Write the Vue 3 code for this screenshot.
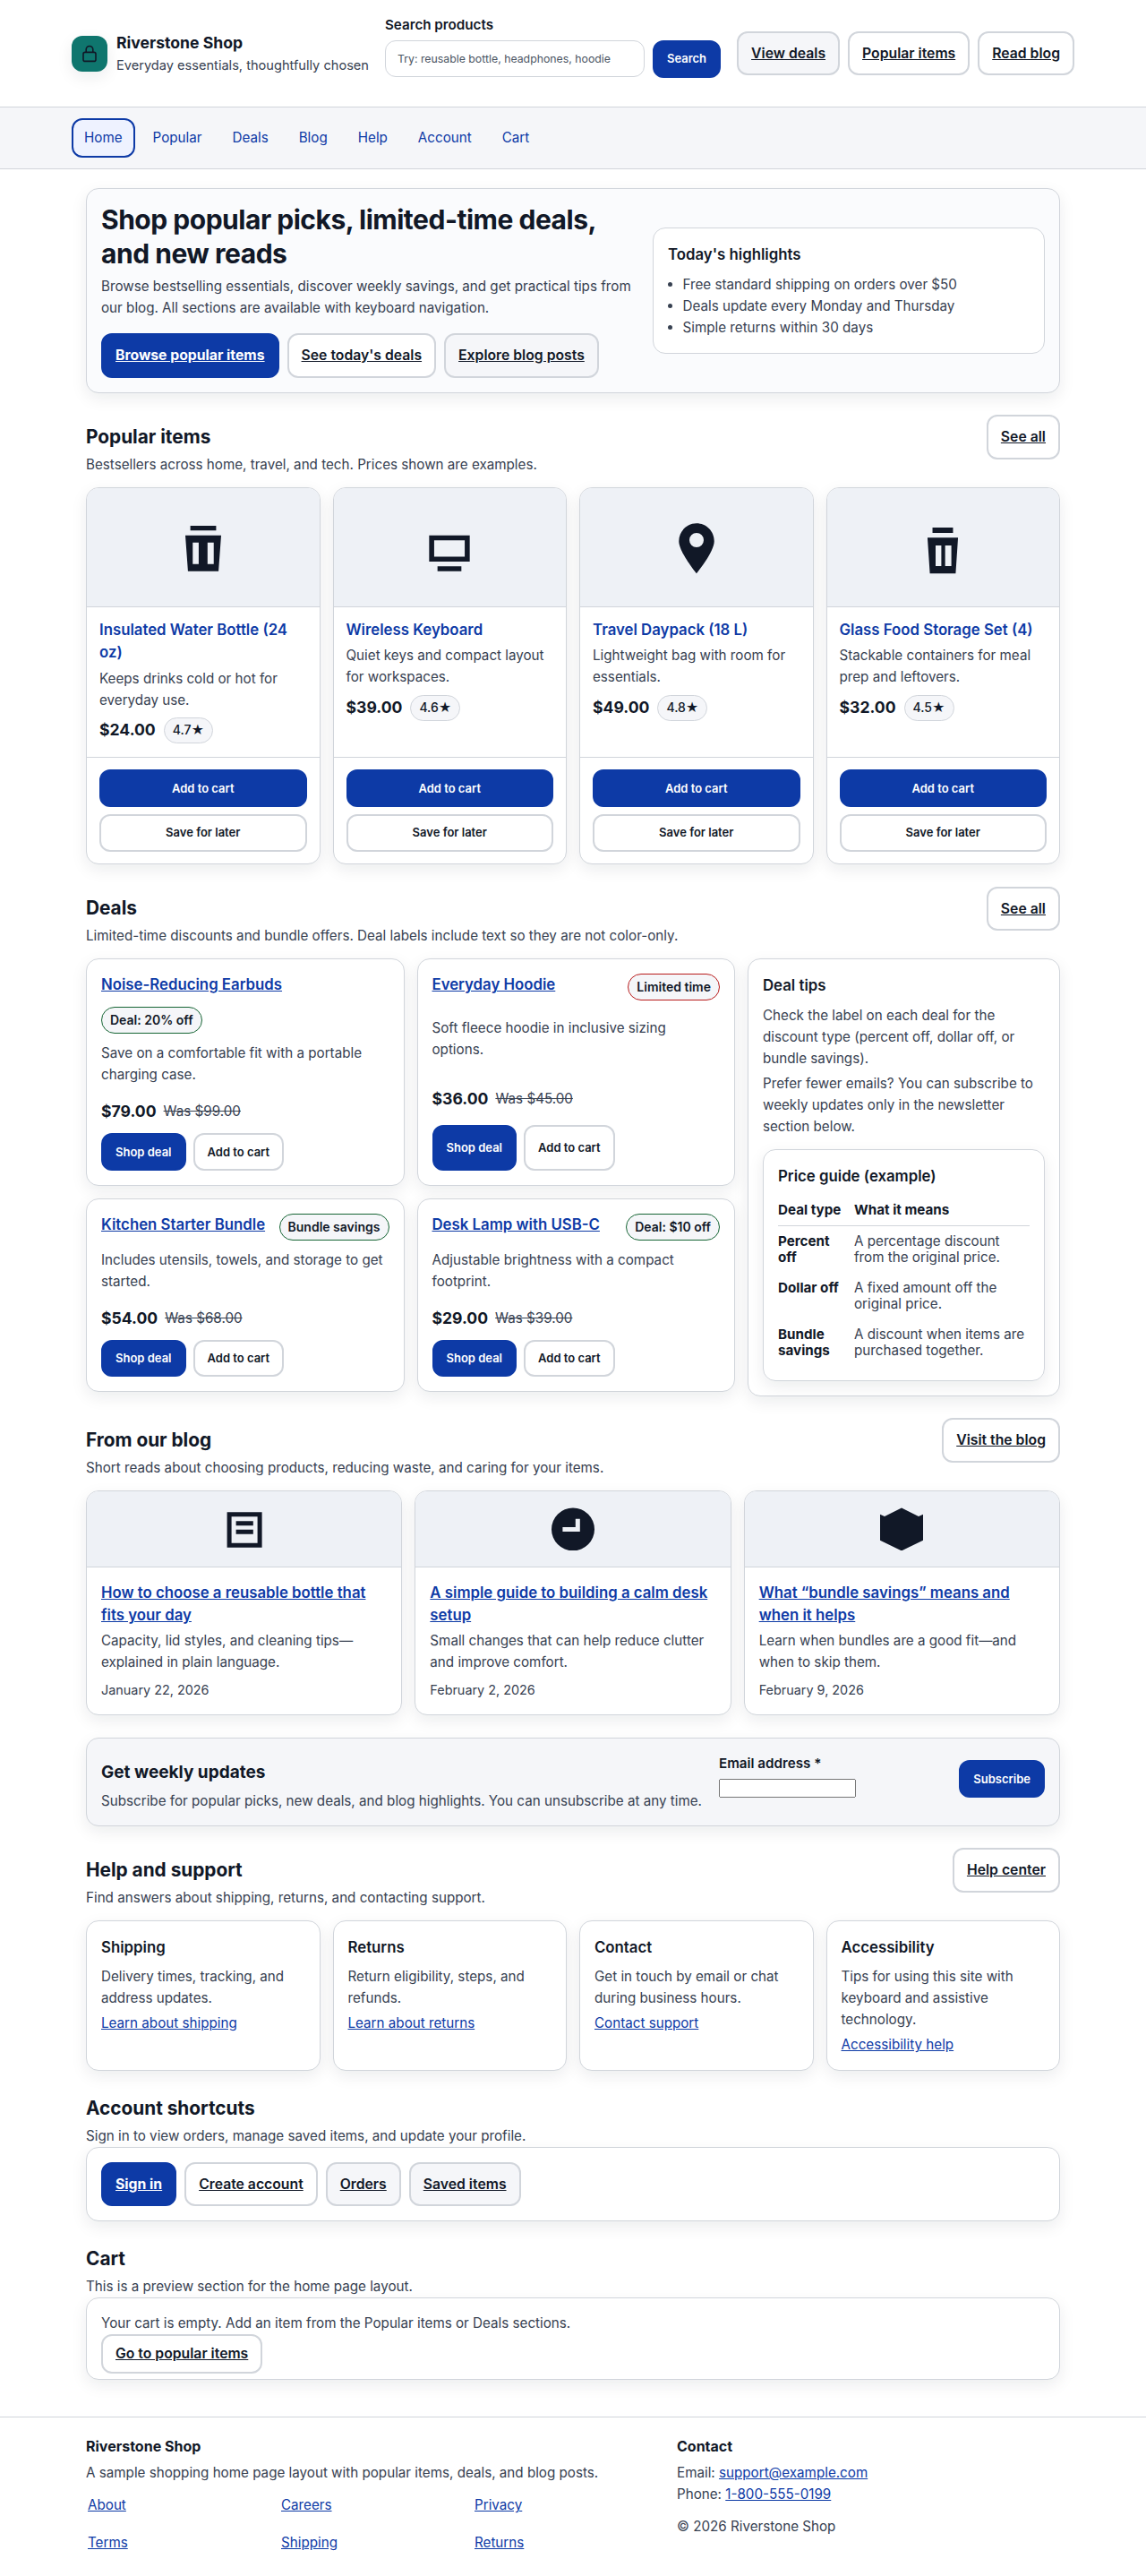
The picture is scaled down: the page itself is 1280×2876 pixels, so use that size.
<template>
  <div class="page">
    <header class="top">
      <div class="top-in">
        <div class="brand">
          <span class="logo">
            <svg viewBox="0 0 24 24" width="24" height="24" fill="none" stroke="#111827" stroke-width="1.6">
              <rect x="5" y="10.4" width="14" height="10" rx="2" />
              <path d="M8.200 10.400V7.300a3.800 3.800 0 0 1 7.600 0v3.100" />
            </svg>
          </span>
          <div>
            <div class="brand-name">Riverstone Shop</div>
            <div class="brand-sub">Everyday essentials, thoughtfully chosen</div>
          </div>
        </div>
        <form class="search" @submit.prevent>
          <label for="q">Search products</label>
          <div class="search-row">
            <input id="q" type="search" placeholder="Try: reusable bottle, headphones, hoodie" />
            <button class="btn primary small">Search</button>
          </div>
        </form>
        <div class="quick">
          <a class="btn soft" href="#">View deals</a>
          <a class="btn plain" href="#">Popular items</a>
          <a class="btn plain" href="#">Read blog</a>
        </div>
      </div>
    </header>

    <nav class="nav">
      <div class="nav-in">
        <a v-for="(n, i) in navItems" :key="n" href="#" :class="{ on: i === 0 }">{{ n }}</a>
      </div>
    </nav>

    <main class="main">
      <section class="hero">
        <div class="hero-copy">
          <h1>Shop popular picks, limited-time deals, and new reads</h1>
          <p>Browse bestselling essentials, discover weekly savings, and get practical tips from our blog. All sections are available with keyboard navigation.</p>
          <div class="row">
            <a class="btn primary" href="#">Browse popular items</a>
            <a class="btn plain" href="#">See today's deals</a>
            <a class="btn soft" href="#">Explore blog posts</a>
          </div>
        </div>
        <aside class="highlights">
          <h2>Today's highlights</h2>
          <ul>
            <li>Free standard shipping on orders over $50</li>
            <li>Deals update every Monday and Thursday</li>
            <li>Simple returns within 30 days</li>
          </ul>
        </aside>
      </section>

      <section class="sec">
        <div class="sec-head">
          <div>
            <h2>Popular items</h2>
            <p>Bestsellers across home, travel, and tech. Prices shown are examples.</p>
          </div>
          <a class="btn plain" href="#">See all</a>
        </div>
        <div class="grid four">
          <article v-for="p in products" :key="p.name" class="card product">
            <div class="media">
              <svg viewBox="0 0 24 24" width="64" height="64" fill="#111827" fill-rule="evenodd">
                <path :d="p.icon" />
              </svg>
            </div>
            <div class="product-body">
              <a class="product-name" href="#">{{ p.name }}</a>
              <p>{{ p.text }}</p>
              <div class="price-row">
                <strong class="price">{{ p.price }}</strong>
                <span class="rating">{{ p.rating }}★</span>
              </div>
            </div>
            <div class="product-actions">
              <button class="btn primary small">Add to cart</button>
              <button class="btn plain small">Save for later</button>
            </div>
          </article>
        </div>
      </section>

      <section class="sec">
        <div class="sec-head">
          <div>
            <h2>Deals</h2>
            <p>Limited-time discounts and bundle offers. Deal labels include text so they are not color-only.</p>
          </div>
          <a class="btn plain" href="#">See all</a>
        </div>
        <div class="deals">
          <div class="deal-grid">
            <article v-for="d in deals" :key="d.name" class="card deal">
              <div class="deal-top">
                <a href="#" class="deal-name">{{ d.name }}</a>
                <span class="tag" :class="d.kind">{{ d.tag }}</span>
              </div>
              <p>{{ d.text }}</p>
              <div class="deal-price">
                <strong class="price">{{ d.price }}</strong>
                <s>Was {{ d.was }}</s>
              </div>
              <div class="deal-actions">
                <a class="btn primary small" href="#">Shop deal</a>
                <button class="btn plain small">Add to cart</button>
              </div>
            </article>
          </div>
          <aside class="card tips">
            <h3>Deal tips</h3>
            <p>Check the label on each deal for the discount type (percent off, dollar off, or bundle savings).</p>
            <p>Prefer fewer emails? You can subscribe to weekly updates only in the newsletter section below.</p>
            <div class="guide">
              <table>
                <caption>Price guide (example)</caption>
                <thead>
                  <tr><th class="c1">Deal type</th><th>What it means</th></tr>
                </thead>
                <tbody>
                  <tr v-for="g in guide" :key="g[0]">
                    <th class="c1">{{ g[0] }}</th>
                    <td>{{ g[1] }}</td>
                  </tr>
                </tbody>
              </table>
            </div>
          </aside>
        </div>
      </section>

      <section class="sec">
        <div class="sec-head">
          <div>
            <h2>From our blog</h2>
            <p>Short reads about choosing products, reducing waste, and caring for your items.</p>
          </div>
          <a class="btn plain" href="#">Visit the blog</a>
        </div>
        <div class="grid three">
          <article v-for="b in posts" :key="b.title" class="card post">
            <div class="media blog-media">
              <svg viewBox="0 0 24 24" width="48" height="48" fill="#111827" fill-rule="evenodd">
                <path :d="b.icon" />
              </svg>
            </div>
            <div class="post-body">
              <a href="#" class="post-title">{{ b.title }}</a>
              <p>{{ b.text }}</p>
              <div class="date">{{ b.date }}</div>
            </div>
          </article>
        </div>
      </section>

      <section class="news">
        <div class="news-copy">
          <h2>Get weekly updates</h2>
          <p>Subscribe for popular picks, new deals, and blog highlights. You can unsubscribe at any time.</p>
        </div>
        <form class="news-form" @submit.prevent>
          <div class="field">
            <label for="mail">Email address *</label>
            <input id="mail" type="email" />
          </div>
          <button class="btn primary small">Subscribe</button>
        </form>
      </section>

      <section class="sec">
        <div class="sec-head">
          <div>
            <h2>Help and support</h2>
            <p>Find answers about shipping, returns, and contacting support.</p>
          </div>
          <a class="btn plain" href="#">Help center</a>
        </div>
        <div class="grid four">
          <article v-for="h in help" :key="h.title" class="card help">
            <h3>{{ h.title }}</h3>
            <p>{{ h.text }}</p>
            <a href="#">{{ h.link }}</a>
          </article>
        </div>
      </section>

      <section class="sec tight">
        <h2>Account shortcuts</h2>
        <p class="lead">Sign in to view orders, manage saved items, and update your profile.</p>
        <div class="card box row">
          <a class="btn primary" href="#">Sign in</a>
          <a class="btn plain" href="#">Create account</a>
          <a class="btn soft" href="#">Orders</a>
          <a class="btn soft" href="#">Saved items</a>
        </div>
      </section>

      <section class="sec tight">
        <h2>Cart</h2>
        <p class="lead">This is a preview section for the home page layout.</p>
        <div class="card box cart">
          <p>Your cart is empty. Add an item from the Popular items or Deals sections.</p>
          <a class="btn plain go" href="#">Go to popular items</a>
        </div>
      </section>
    </main>

    <footer class="foot">
      <div class="foot-in">
        <div>
          <div class="foot-title">Riverstone Shop</div>
          <p>A sample shopping home page layout with popular items, deals, and blog posts.</p>
          <div class="foot-links">
            <a v-for="l in footLinks" :key="l" href="#">{{ l }}</a>
          </div>
        </div>
        <div>
          <div class="foot-title">Contact</div>
          <p>Email: <a href="#">support@example.com</a></p>
          <p>Phone: <a href="#">1-800-555-0199</a></p>
          <p class="copy">© 2026 Riverstone Shop</p>
        </div>
      </div>
    </footer>
  </div>
</template>

<script setup>
const navItems = ['Home', 'Popular', 'Deals', 'Blog', 'Help', 'Account', 'Cart']

// icon paths, drawn on a 24 unit box
const trash = 'M6.6 3h10.8v2H6.6zM4.5 7h15l-1.1 15H5.6zM7.6 10v9h2.5v-9zM13.8 10v9h2.6v-9z'
const trashSmall = 'M7.7 3.750h8.600V6H7.700zM5.600 8h12.800l-1 15H6.600zM9 11.250v8.650h2.400v-8.650zM13 11.250v8.650h2.600v-8.650z'
const monitor = 'M3.500 7h17v11h-17zM5.600 9.100v6.800h12.800V9.100zM7 20h10v2H7z'
const pin = 'M12 2C8 2 4.600 5.200 4.600 9.500 4.600 14 12 23 12 23s7.400-9 7.400-13.500C19.400 5.200 16 2 12 2zM12 6a3 3 0 1 0 0 6 3 3 0 0 0 0-6z'

const products = [
  { name: 'Insulated Water Bottle (24 oz)', text: 'Keeps drinks cold or hot for everyday use.', price: '$24.00', rating: '4.7', icon: trash },
  { name: 'Wireless Keyboard', text: 'Quiet keys and compact layout for workspaces.', price: '$39.00', rating: '4.6', icon: monitor },
  { name: 'Travel Daypack (18 L)', text: 'Lightweight bag with room for essentials.', price: '$49.00', rating: '4.8', icon: pin },
  { name: 'Glass Food Storage Set (4)', text: 'Stackable containers for meal prep and leftovers.', price: '$32.00', rating: '4.5', icon: trashSmall }
]

const deals = [
  { name: 'Noise-Reducing Earbuds', tag: 'Deal: 20% off', kind: 'green', text: 'Save on a comfortable fit with a portable charging case.', price: '$79.00', was: '$99.00' },
  { name: 'Everyday Hoodie', tag: 'Limited time', kind: 'red', text: 'Soft fleece hoodie in inclusive sizing options.', price: '$36.00', was: '$45.00' },
  { name: 'Kitchen Starter Bundle', tag: 'Bundle savings', kind: 'green', text: 'Includes utensils, towels, and storage to get started.', price: '$54.00', was: '$68.00' },
  { name: 'Desk Lamp with USB-C', tag: 'Deal: $10 off', kind: 'green', text: 'Adjustable brightness with a compact footprint.', price: '$29.00', was: '$39.00' }
]

const guide = [
  ['Percent off', 'A percentage discount from the original price.'],
  ['Dollar off', 'A fixed amount off the original price.'],
  ['Bundle savings', 'A discount when items are purchased together.']
]

const posts = [
  { title: 'How to choose a reusable bottle that fits your day', text: 'Capacity, lid styles, and cleaning tips—explained in plain language.', date: 'January 22, 2026', icon: 'M2.300 2.650H21.800V22.350H2.300zM4.800 5.150V19.850H19.300V5.150zM7.300 7.650H16.900V10.150H7.300zM7.300 12.350H16.900V14.850H7.300z' },
  { title: 'A simple guide to building a calm desk setup', text: 'Small changes that can help reduce clutter and improve comfort.', date: 'February 2, 2026', icon: 'M12 .2a12 12 0 1 0 0 24 12 12 0 0 0 0-24zM13.400 6.400h2.500v7.100H6.200V11h7.200z' },
  { title: 'What “bundle savings” means and when it helps', text: 'Learn when bundles are a good fit—and when to skip them.', date: 'February 9, 2026', icon: 'M12 .2L21.500 5 24 3.900V18.400L12 24.200 0 18.400V3.900L2.500 5z' }
]

const help = [
  { title: 'Shipping', text: 'Delivery times, tracking, and address updates.', link: 'Learn about shipping' },
  { title: 'Returns', text: 'Return eligibility, steps, and refunds.', link: 'Learn about returns' },
  { title: 'Contact', text: 'Get in touch by email or chat during business hours.', link: 'Contact support' },
  { title: 'Accessibility', text: 'Tips for using this site with keyboard and assistive technology.', link: 'Accessibility help' }
]

const footLinks = ['About', 'Careers', 'Privacy', 'Terms', 'Shipping', 'Returns']
</script>

<style>
body {
  background: #fff;
}
</style>

<style scoped>
.page {
  font-family: Inter, "Liberation Sans", sans-serif;
  font-size: 15.2px;
  line-height: 24px;
  color: #111827;
}
h1, h2, h3, p, ul {
  margin: 0;
}
a {
  color: #0d3aa6;
}

/* buttons */
.btn {
  display: inline-flex;
  align-items: center;
  justify-content: center;
  box-sizing: border-box;
  padding: 10px 14px;
  border: 2px solid #d1d5db;
  border-radius: 12px;
  font: 600 15.750px/25.600px Inter, "Liberation Sans", sans-serif;
  color: #111827;
  background: #fff;
  white-space: nowrap;
}
.btn.soft {
  background: #f5f6f9;
}
.btn.primary {
  background: #0d3aa6;
  border-color: #0d3aa6;
  color: #fff;
  font-weight: 700;
}
.btn.small {
  font-size: 13px;
  font-weight: 600;
  line-height: 20.800px;
  padding: 8.400px 14px;
  text-decoration: none;
}
.row {
  display: flex;
  gap: 9px;
  flex-wrap: wrap;
}

/* header */
.top {
  border-bottom: 1px solid #d1d5db;
}
.top-in {
  max-width: 1120px;
  height: 119px;
  box-sizing: border-box;
  margin: 0 auto;
  display: flex;
  align-items: center;
  gap: 18px;
}
.brand {
  display: flex;
  align-items: center;
  gap: 10px;
}
.logo {
  width: 40px;
  height: 40px;
  border-radius: 12px;
  background: #0f766e;
  display: flex;
  align-items: center;
  justify-content: center;
  box-shadow: 0 6px 18px rgba(17, 24, 39, 0.08);
}
.brand-name {
  font-size: 17.600px;
  font-weight: 700;
  line-height: 26px;
}
.brand-sub {
  font-size: 14.600px;
  color: #374151;
  line-height: 24px;
}
.search {
  flex: 1;
  align-self: flex-start;
  padding-top: 16px;
}
.search label {
  display: block;
  font-weight: 600;
  line-height: 24px;
  margin-bottom: 5px;
}
.search-row {
  display: flex;
  gap: 9px;
  align-items: center;
}
.search input {
  flex: 1;
  min-width: 0;
  box-sizing: border-box;
  height: 41px;
  padding: 0 13px;
  border: 1px solid #d1d5db;
  border-radius: 12px;
  font: 12.300px Inter, sans-serif;
  background: #fff;
}
.search input::placeholder {
  color: #4b5563;
}
.quick {
  display: flex;
  gap: 9px;
}

/* nav */
.nav {
  background: #f5f6f9;
  border-bottom: 1px solid #d1d5db;
}
.nav-in {
  max-width: 1120px;
  height: 68px;
  margin: 0 auto;
  display: flex;
  align-items: center;
  gap: 6px;
}
.nav a {
  display: flex;
  align-items: center;
  box-sizing: border-box;
  height: 44px;
  padding: 0 12px;
  border: 2px solid transparent;
  border-radius: 12px;
  text-decoration: none;
}
.nav a.on {
  border-color: #0d3aa6;
  background: #eef2ff;
}

/* main */
.main {
  max-width: 1088px;
  margin: 0 auto;
  padding-top: 21px;
}
.card,
.hero,
.news {
  box-sizing: border-box;
  border: 1px solid #d1d5db;
  border-radius: 14px;
  background: #fff;
  box-shadow: 0 6px 18px rgba(17, 24, 39, 0.08);
}
.hero {
  background: #fafbfd;
  padding: 16px;
  display: grid;
  grid-template-columns: 1fr 438px;
  gap: 16px;
  align-items: center;
}
.hero h1 {
  font-size: 30px;
  line-height: 37.500px;
  font-weight: 700;
  letter-spacing: -0.480px;
  margin-bottom: 6px;
}
.hero p {
  color: #374151;
  margin-bottom: 16px;
}
.highlights {
  border: 1px solid #d1d5db;
  border-radius: 14px;
  background: #fff;
  padding: 16px;
}
.highlights h2 {
  font-size: 16.800px;
  font-weight: 600;
  line-height: 26.880px;
  margin-bottom: 8px;
}
.highlights ul {
  padding-left: 16.500px;
  color: #374151;
}

.sec {
  margin-top: 24.600px;
}
.sec-head {
  display: flex;
  justify-content: space-between;
  align-items: flex-start;
  margin-bottom: 13px;
}
.sec h2 {
  font-size: 20.800px;
  line-height: 32px;
  font-weight: 700;
}
.sec-head p,
.lead {
  color: #374151;
  margin-top: 3px;
}
.sec-head h2 {
  margin-top: 8.500px;
}
.grid {
  display: grid;
  gap: 14px;
}
.four {
  grid-template-columns: repeat(4, 1fr);
}
.three {
  grid-template-columns: repeat(3, 1fr);
}

/* products */
.product {
  display: flex;
  flex-direction: column;
  overflow: hidden;
}
.media {
  height: 132px;
  background: #eef1f6;
  border-bottom: 1px solid #d1d5db;
  display: flex;
  align-items: center;
  justify-content: center;
}
.product-body {
  padding: 13.500px 14px 15px;
  flex: 1;
  display: flex;
  flex-direction: column;
}
.product-name {
  font-size: 16.800px;
  font-weight: 600;
  line-height: 25.200px;
  text-decoration: none;
}
.product-body p {
  color: #374151;
  margin: 4px 0 7.400px;
}
.price-row {
  display: flex;
  align-items: center;
  gap: 9px;
}
.price {
  font-size: 17.600px;
  font-weight: 700;
  line-height: 28px;
}
.rating {
  font-size: 14px;
  font-weight: 500;
  padding: 2.300px 9px;
  line-height: 22.400px;
  border: 1px solid #d1d5db;
  border-radius: 999px;
  background: #f5f6f9;
}
.product-actions {
  border-top: 1px solid #d1d5db;
  padding: 13.500px 14px;
  display: grid;
  gap: 8px;
}

/* deals */
.deals {
  display: grid;
  grid-template-columns: 725px 1fr;
  gap: 14px;
  align-items: start;
}
.deal-grid {
  display: grid;
  grid-template-columns: 1fr 1fr;
  gap: 14px;
}
.deal {
  padding: 16px;
  display: grid;
  gap: 10px;
}
.deal-top {
  display: flex;
  flex-wrap: wrap;
  justify-content: space-between;
  align-items: flex-start;
  gap: 12px 10px;
}
.deal-name {
  font-size: 16.800px;
  font-weight: 600;
  line-height: 25.200px;
}
.tag {
  font-size: 14px;
  font-weight: 600;
  line-height: 22.400px;
  padding: 2.600px 9px;
  border: 1px solid #166534;
  border-radius: 999px;
  background: #f5f6f9;
}
.tag.red {
  border-color: #b91c1c;
}
.deal p {
  color: #374151;
}
.deal-price {
  display: flex;
  align-items: center;
  gap: 8px;
  padding-top: 5.300px;
}
.deal-price s {
  color: #374151;
}
.deal-actions {
  display: flex;
  gap: 8px;
}
.tips {
  padding: 16px;
}
.tips h3 {
  font-size: 16.800px;
  font-weight: 600;
  line-height: 26.880px;
  margin-bottom: 8px;
}
.tips p {
  color: #374151;
  margin-bottom: 4px;
}
.guide {
  margin-top: 12.600px;
  border: 1px solid #d1d5db;
  border-radius: 14px;
  padding: 16px;
  box-shadow: 0 6px 18px rgba(17, 24, 39, 0.08);
}
.guide table {
  width: 100%;
  border-collapse: collapse;
  table-layout: fixed;
  line-height: 18px;
}
.guide caption {
  text-align: left;
  font-size: 16.800px;
  font-weight: 600;
  line-height: 26px;
  padding-bottom: 8px;
}
.guide th,
.guide td {
  text-align: left;
  vertical-align: top;
  padding: 8px 0;
  font-weight: 700;
}
.guide td {
  font-weight: 400;
  color: #374151;
}
.guide .c1 {
  width: 77px;
  padding-right: 8px;
}
.guide thead th {
  border-bottom: 1px solid #d1d5db;
}

/* blog */
.post {
  overflow: hidden;
}
.blog-media {
  height: 84px;
}
.post-body {
  padding: 16px;
}
.post-title {
  display: block;
  font-size: 16.800px;
  font-weight: 600;
  line-height: 25.200px;
  margin-bottom: 4px;
}
.post-body p {
  color: #374151;
  margin-bottom: 8px;
}
.date {
  color: #374151;
  font-size: 14.400px;
  line-height: 22px;
}

/* newsletter */
.news {
  margin-top: 24.600px;
  background: #f5f6f9;
  padding: 16px 16px 15px;
  display: flex;
  gap: 19px;
  align-items: flex-start;
}
.news-copy {
  padding-top: 7px;
}
.news h2 {
  font-size: 19px;
  font-weight: 700;
  line-height: 30px;
  margin-bottom: 5px;
}
.news p {
  color: #374151;
}
.news-form {
  flex: 1;
  display: flex;
  align-items: flex-end;
  justify-content: space-between;
}
.field label {
  display: block;
  font-weight: 600;
  margin-bottom: 5px;
}
.field input {
  display: block;
  box-sizing: border-box;
  width: 153px;
  height: 21px;
}

/* help */
.help {
  padding: 16px;
}
.help h3 {
  font-size: 16.800px;
  font-weight: 600;
  line-height: 26.880px;
  margin-bottom: 7.500px;
}
.help p {
  color: #374151;
  margin-bottom: 4px;
}

.tight {
  margin-top: 25.600px;
}
.box {
  padding: 16px;
}
.cart {
  padding-bottom: 6px;
}
.cart p {
  color: #374151;
}
.btn.go {
  padding: 7px 14px;
}

/* footer */
.foot {
  margin-top: 41px;
  border-top: 1px solid #d1d5db;
  padding: 20px 0 19px;
}
.foot-in {
  max-width: 1088px;
  margin: 0 auto;
  display: grid;
  grid-template-columns: 642px 1fr;
  gap: 18px;
}
.foot-title {
  font-size: 16px;
  font-weight: 700;
  line-height: 25.600px;
  margin-bottom: 5px;
}
.foot p {
  color: #374151;
}
.foot-links {
  margin-top: 6px;
  display: grid;
  grid-template-columns: repeat(3, 1fr);
  gap: 6px;
}
.foot-links a {
  display: flex;
  align-items: center;
  min-height: 36px;
  padding: 0 2px;
}
.copy {
  margin-top: 12px;
}
</style>
